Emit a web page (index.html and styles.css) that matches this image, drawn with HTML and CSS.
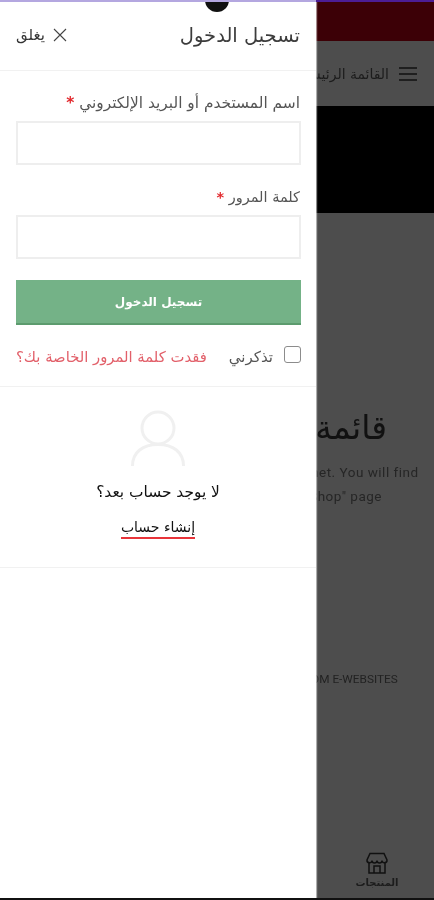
FILE: index.html
```html
<!DOCTYPE html>
<html lang="ar" dir="rtl">
<head>
<meta charset="utf-8">
<title>تسجيل الدخول</title>
<link rel="stylesheet" href="styles.css">
</head>
<body>
<div class="page">
  <div class="topbar"></div>
  <div class="menubar">
    <svg class="burger" viewBox="0 0 18 16" width="18" height="16"><path d="M0 2h18M0 8h18M0 14h18" stroke="#111" stroke-width="1.4" fill="none"/></svg>
    <span class="menu-label">القائمة الرئيسية</span>
  </div>
  <div class="hero"></div>
  <div class="content">
    <h1 class="page-title">قائمة المنتجات</h1>
    <p class="page-text" dir="ltr">Lorem ipsum dolor sit amet consectetur sit amet. You will find<br>Lorem ipsum dolor sit amet adipiscing "Shop" page</p>
    <p class="page-brand" dir="ltr">COPYRIGHT 2023 ALL RIGHTS RESERVED. MADE FROM E-WEBSITES</p>
  </div>
  <nav class="tabbar">
    <div class="tab">
      <svg viewBox="0 0 24 24" width="24" height="24" fill="none" stroke="#111" stroke-width="1.5"><path d="M5 2.500h14l3 6.500a2.500 2.500 0 0 1-5 .5 2.500 2.500 0 0 1-5 0 2.500 2.500 0 0 1-5 0 2.500 2.500 0 0 1-5-.5z"/><path d="M4 12v10h16V12M9 22v-7h6v7"/></svg>
      <span>المنتجات</span>
    </div>
  </nav>
</div>
<aside class="drawer">
  <header class="drawer-head">
    <h2 class="drawer-title">تسجيل الدخول</h2>
    <button class="close" type="button">
      <svg viewBox="0 0 14 14" width="14" height="14"><path d="M1 1l12 12M13 1L1 13" stroke="#444" stroke-width="1.1" fill="none"/></svg>
      <span>يغلق</span>
    </button>
  </header>
  <form class="login">
    <label class="field-label label-user">اسم المستخدم أو البريد الإلكتروني <b>*</b></label>
    <input class="field field-user" type="text">
    <label class="field-label label-pass">كلمة المرور <b>*</b></label>
    <input class="field field-pass" type="password">
    <button class="submit" type="button">تسجيل الدخول</button>
    <div class="options">
      <label class="remember"><input type="checkbox" class="check"><span>تذكرني</span></label>
      <a class="lost">فقدت كلمة المرور الخاصة بك؟</a>
    </div>
  </form>
  <section class="register">
    <svg class="avatar" viewBox="0 0 54 56" width="54" height="56" fill="none" stroke="#f0f0f0" stroke-width="3"><circle cx="27" cy="18" r="16"/><path d="M1.500 56C1.500 42 12 34.500 27 34.500S52.500 42 52.500 56"/></svg>
    <p class="no-account">لا يوجد حساب بعد؟</p>
    <a class="create">إنشاء حساب</a>
  </section>
</aside>
<div class="cutout"></div>
<div class="statusline"></div>
<div class="homeline"></div>
</body>
</html>
```
FILE: styles.css
```css
* { box-sizing: border-box; }
html, body { margin: 0; height: 900px; overflow: hidden; }
body { font-family: "DejaVu Sans", "Noto Sans", sans-serif; background: #4d4d4d; position: relative; width: 434px; }

.page { height: 900px; display: flex; flex-direction: column; background: #4d4d4d; filter: blur(.5px); }
.topbar { height: 39px; flex: none; background: #3c0006; margin-top: 2px; }
.menubar { height: 65px; flex: none; display: flex; align-items: center; gap: 10px; padding-right: 17px; color: #1c1c1c; font-size: 14px; white-space: nowrap; }
.burger { flex: none; }
.hero { height: 107px; flex: none; background: #000; }
.content { flex: 1; padding: 195px 16px 0; position: relative; min-height: 0; text-align: center; }
.page-title { margin: 0; padding-right: 31px; font-size: 33px; font-weight: 400; line-height: 40px; height: 40px; color: #111; white-space: nowrap; text-align: right; }
.page-text { margin: 12px 0 0; font: 13.500px/24px Roboto, sans-serif; letter-spacing: .5px; color: #262626; text-align: center; white-space: nowrap; }
.page-brand { margin: 0; font: 11.800px/14px Roboto, sans-serif; color: #222; position: absolute; top: 459px; left: 0; right: 0; text-align: center; white-space: nowrap; }
.tabbar { height: 63px; flex: none; display: flex; padding-right: 32px; }
.tab { width: 50px; display: flex; flex-direction: column; align-items: center; gap: 2px; padding-top: 14px; font-size: 10px; font-weight: 700; color: #1c1c1c; white-space: nowrap; }

.drawer { position: absolute; top: 0; left: 0; width: 316px; height: 900px; background: #fff; box-shadow: 1px 0 1px rgba(255,255,255,.55); filter: blur(.4px); display: flex; flex-direction: column; }
.drawer-head { height: 71px; flex: none; display: flex; align-items: center; justify-content: space-between; padding: 0 16px; border-bottom: 1px solid #f1f1f1; }
.drawer-title { margin: 0; font-size: 19.500px; font-weight: 400; color: #3c3c3c; }
.close { border: 0; background: none; padding: 0; display: flex; align-items: center; gap: 8px; font: 15px "DejaVu Sans", sans-serif; color: #333; }

.login { padding: 22px 15px 0 16px; display: flex; flex-direction: column; flex: none; height: 316px; border-bottom: 1px solid #f1f1f1; }
.field-label { font-size: 15.400px; line-height: 20px; height: 28px; padding-right: 1px; color: #555; }
.label-pass { font-size: 14.500px; }
.field-label b { color: #e2282d; font-weight: 700; }
.field { width: 285px; height: 44px; border: 2px solid #eee; background: #fff; margin-bottom: 22px; display: block; }
.field-pass { margin-bottom: 21px; }
.submit { width: 285px; height: 45px; border: 0; border-bottom: 2px solid #5c9b6e; background: #74b287; color: #fff; font: 700 12px "DejaVu Sans", sans-serif; }
.options { display: flex; justify-content: space-between; align-items: flex-start; margin-top: 21px; }
.remember { display: flex; align-items: flex-start; gap: 11px; font-size: 15px; color: #555; }
.check { appearance: none; width: 17px; height: 17px; margin: 0; border: 1.500px solid #8c8c8c; border-radius: 3px; background: #fff; flex: none; }
.remember span { margin-top: 2px; }
.lost { font-size: 14.800px; color: #e2606a; white-space: nowrap; margin-top: 2px; }

.register { height: 181px; flex: none; border-bottom: 1px solid #f1f1f1; display: flex; flex-direction: column; align-items: center; padding-top: 23px; }
.avatar { display: block; }
.no-account { margin: 15px 0 0; font-size: 15.400px; line-height: 22px; color: #111; }
.create { margin-top: 15px; font-size: 14px; line-height: 19px; color: #111; border-bottom: 2px solid #e8343a; }

.cutout { position: absolute; top: -12px; left: 205px; width: 24px; height: 24px; border-radius: 50%; background: #111; }
.statusline { position: absolute; top: 0; left: 0; width: 434px; height: 2px; background: linear-gradient(to right, #b4a7e0 316px, #4c1d95 316px); }
.homeline { position: absolute; bottom: 0; left: 0; width: 434px; height: 2px; background: #111; }
```
